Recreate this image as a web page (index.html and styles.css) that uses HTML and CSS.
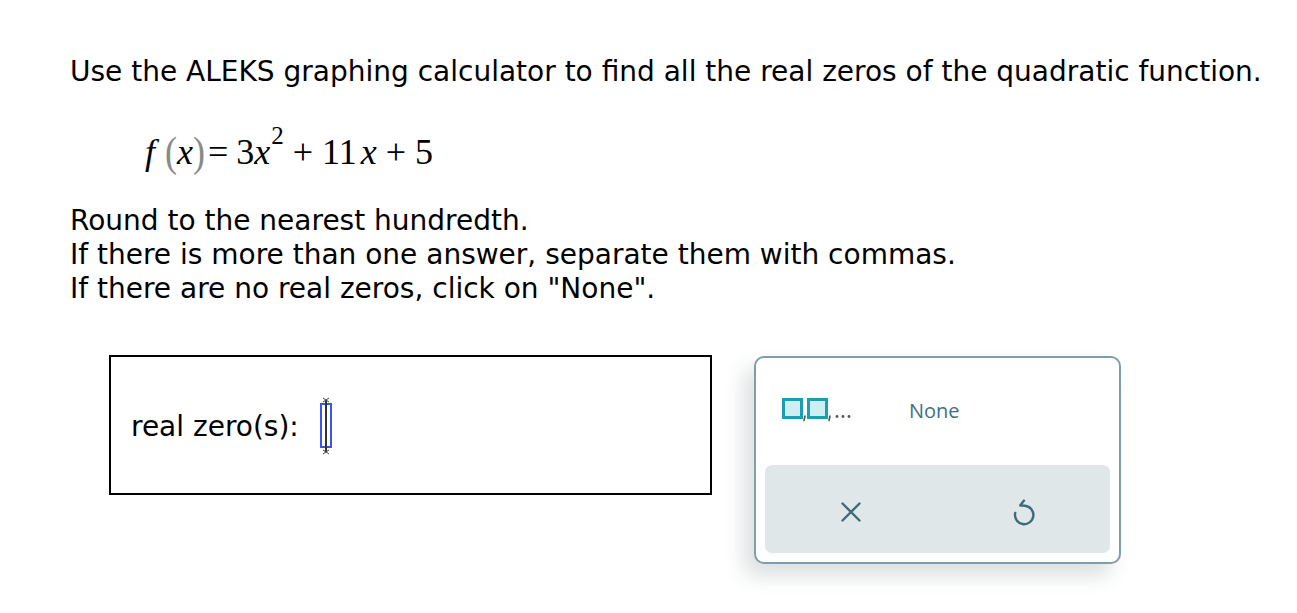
FILE: index.html
```html
<!DOCTYPE html>
<html>
<head>
<meta charset="utf-8">
<link rel="stylesheet" href="styles.css">
</head>
<body>
<div class="page">
  <p class="line heading">Use the ALEKS graphing calculator to find all the real zeros of the quadratic function.</p>
  <div class="formula">
    <span class="it f">f</span><span class="paren">(</span><span class="it">x</span><span class="paren">)</span><span class="op eq">=</span><span>3</span><span class="it">x</span><sup class="sup">2</sup><span class="op">+</span><span>11</span><span class="it xx">x</span><span class="op">+</span><span>5</span>
  </div>
  <div class="instructions">
    <p class="line">Round to the nearest hundredth.</p>
    <p class="line">If there is more than one answer, separate them with commas.</p>
    <p class="line">If there are no real zeros, click on "None".</p>
  </div>
  <div class="work">
    <div class="answer">
      <span class="label">real zero(s):</span>
      <span class="input">
        <svg class="cursor" width="14" height="58" viewBox="0 0 14 58">
          <rect x="2" y="7" width="10" height="43" fill="none" stroke="#3a55f5" stroke-width="2"/>
          <line x1="7" y1="3" x2="7" y2="55" stroke="#333" stroke-width="2"/>
          <path d="M4 1 L7 3 L10 1 M4 5 L7 3 L10 5 M4 53 L7 55 L10 53 M4 57 L7 55 L10 57" fill="none" stroke="#444" stroke-width="1"/>
        </svg>
      </span>
    </div>
    <div class="panel">
      <div class="toprow">
        <button class="key">
          <svg width="74" height="24" viewBox="0 0 74 24">
            <rect x="1.5" y="1.5" width="18" height="18" fill="#cdeff4" stroke="#1c9db4" stroke-width="3"/>
            <path d="M23 18 L22 22.5" stroke="#555" stroke-width="1.6" stroke-linecap="round"/>
            <rect x="26.5" y="1.5" width="18" height="18" fill="#cdeff4" stroke="#1c9db4" stroke-width="3"/>
            <path d="M48 18 L47 22.5" stroke="#555" stroke-width="1.6" stroke-linecap="round"/>
            <circle cx="55" cy="18.5" r="1.4" fill="#555"/>
            <circle cx="61" cy="18.5" r="1.4" fill="#555"/>
            <circle cx="67" cy="18.5" r="1.4" fill="#555"/>
          </svg>
        </button>
        <button class="key none">None</button>
      </div>
      <div class="bottomrow">
        <button class="key action">
          <svg width="24" height="24" viewBox="0 0 24 24">
            <path d="M3.5 3.5 L20.5 20.5 M20.5 3.5 L3.5 20.5" stroke="#3f6b78" stroke-width="2.4" stroke-linecap="round"/>
          </svg>
        </button>
        <button class="key action">
          <svg width="28" height="32" viewBox="0 0 28 32">
            <path d="M5.2 17 A9.2 9.2 0 1 0 15 9.8 L10.2 9.4 M10.2 9.4 L14 4.6" fill="none" stroke="#3f6b78" stroke-width="2.4" stroke-linecap="round" stroke-linejoin="round"/>
          </svg>
        </button>
      </div>
    </div>
  </div>
</div>
</body>
</html>
```
FILE: styles.css
```css
html, body {
  margin: 0;
  padding: 0;
  background: #ffffff;
}
.page {
  padding: 55px 0 49px 70px;
  font-family: "DejaVu Sans", Verdana, sans-serif;
  font-size: 28px;
  color: #000;
}
.line {
  margin: 0;
  line-height: 34px;
  white-space: nowrap;
}
.formula {
  height: 115px;
  box-sizing: border-box;
  padding: 43px 0 0 75px;
  font-family: "Liberation Serif", "Times New Roman", serif;
  font-size: 36px;
  line-height: 40px;
  white-space: nowrap;
}
.formula span {
  display: inline-block;
}
.it {
  font-style: italic;
}
.f {
  margin-right: 10px;
}
.paren {
  color: #8a8a8a;
  transform: scaleY(1.2);
}
.op {
  margin: 0 9px;
}
.eq {
  margin: 0 8px 0 3px;
}
.sup {
  font-size: 25px;
  vertical-align: 20px;
  line-height: 0;
  margin-left: 1px;
}
.xx {
  margin-left: 4px;
}
.work {
  display: flex;
  align-items: flex-start;
  margin-top: 49px;
  margin-left: 39px;
  gap: 42px;
}
.answer {
  width: 603px;
  height: 140px;
  box-sizing: border-box;
  border: 2px solid #000;
  display: flex;
  align-items: center;
  padding: 0 0 0 20px;
}
.label {
  margin-right: 20px;
  margin-top: 2px;
}
.input {
  display: inline-flex;
  align-items: center;
  height: 58px;
  margin-top: 2px;
}
.panel {
  margin-top: 1px;
  width: 367px;
  height: 208px;
  box-sizing: border-box;
  border: 2px solid #809ea6;
  border-radius: 10px;
  padding: 9px;
  display: flex;
  flex-direction: column;
  gap: 10px;
  box-shadow: -10px 12px 20px rgba(40, 60, 70, 0.16);
  background: #fff;
}
.key {
  border: 0;
  background: transparent;
  padding: 0;
  margin: 0;
  display: flex;
  align-items: center;
  justify-content: center;
  cursor: pointer;
}
.toprow {
  height: 88px;
  display: flex;
  align-items: center;
  padding-left: 17px;
  gap: 53px;
}
.toprow .key {
  margin-top: -2px;
}
.none {
  font-family: "Open Sans", Lato, sans-serif;
  font-size: 20px;
  color: #41707e;
  margin-top: -5px;
}
.bottomrow {
  height: 88px;
  background: #dfe7e9;
  border-radius: 7px;
  display: grid;
  grid-template-columns: 1fr 1fr;
}
.action {
  height: 100%;
}
.action svg {
  margin-top: 6px;
}
```
